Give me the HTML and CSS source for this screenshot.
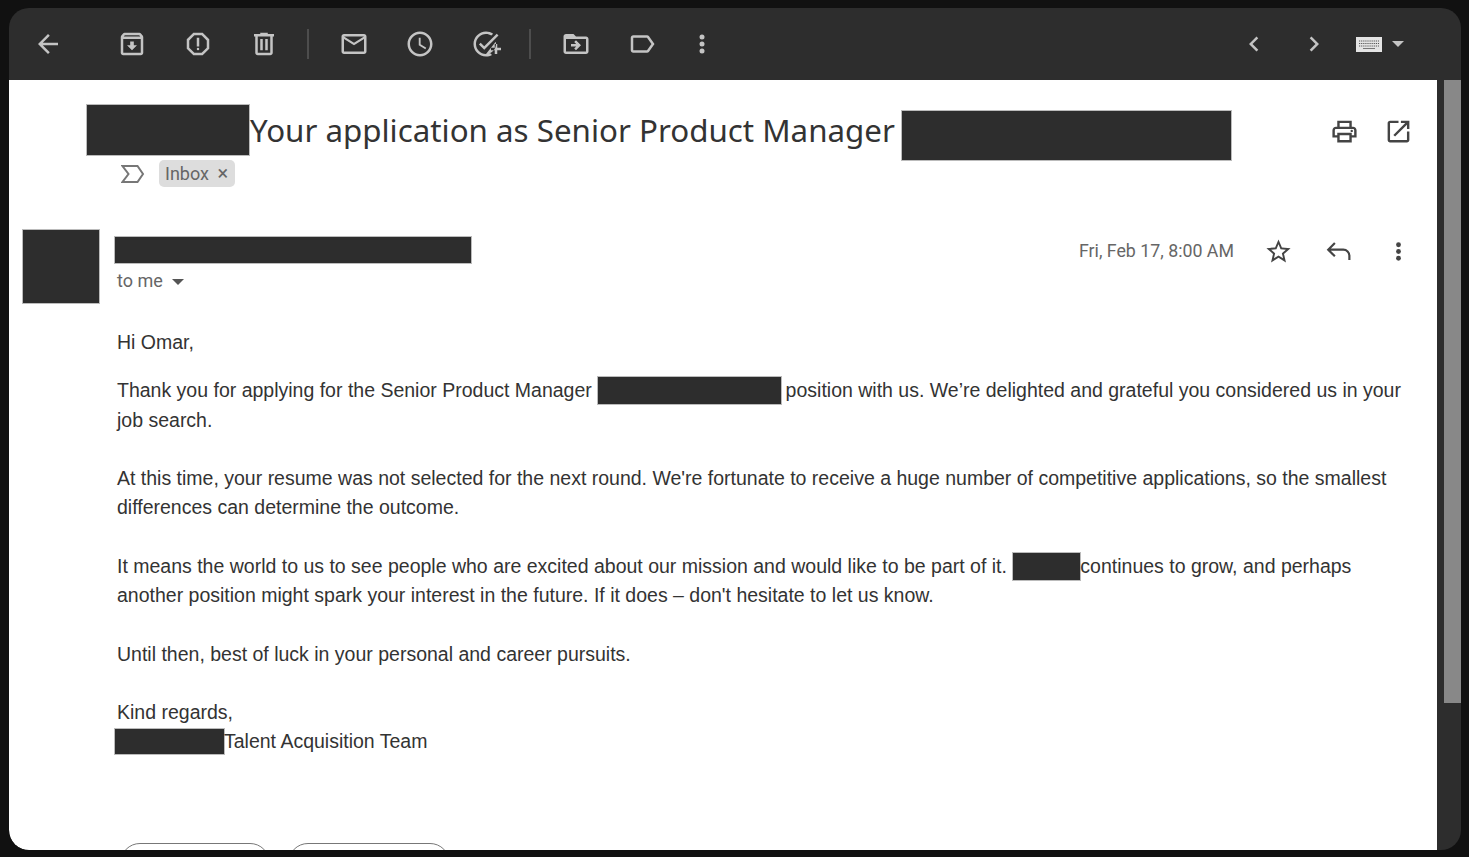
FILE: index.html
```html
<!DOCTYPE html>
<html lang="en">

<head>
    <meta charset="UTF-8">
    <title>Your application as Senior Product Manager</title>
    <link rel="stylesheet" href="styles.css">
</head>

<body>
    <div class="window">
        <div class="toolbar">
            <svg class="icon back" viewBox="0 0 24 24"><path d="M20 11H7.83l5.59-5.59L12 4l-8 8 8 8 1.41-1.41L7.83 13H20v-2z"/></svg>
            <div class="tool-group">
                <svg class="icon" viewBox="0 0 24 24"><path d="M20.54 5.23l-1.39-1.68C18.88 3.21 18.47 3 18 3H6c-.47 0-.88.21-1.16.55L3.46 5.23C3.17 5.57 3 6.02 3 6.5V19c0 1.1.9 2 2 2h14c1.1 0 2-.9 2-2V6.5c0-.48-.17-.93-.46-1.27zM6.24 5h11.52l.83 1H5.42l.82-1zM5 19V8h14v11H5zm8.45-9h-2.9v3H8l4 4 4-4h-2.55z"/></svg>
                <svg class="icon" viewBox="0 0 24 24"><path d="M15.73 3H8.27L3 8.27v7.46L8.27 21h7.46L21 15.73V8.27L15.73 3zM19 14.9L14.9 19H9.1L5 14.9V9.1L9.1 5h5.8L19 9.1v5.8z"/><circle cx="12" cy="16" r="1"/><path d="M11 7h2v7h-2z"/></svg>
                <svg class="icon" viewBox="0 0 24 24"><path d="M15 4V3H9v1H4v2h1v13c0 1.1.9 2 2 2h10c1.1 0 2-.9 2-2V6h1V4h-5zm2 15H7V6h10v13z"/><path d="M9 8h2v9H9zm4 0h2v9h-2z"/></svg>
            </div>
            <div class="tool-sep"></div>
            <div class="tool-group">
                <svg class="icon" viewBox="0 0 24 24"><path d="M20 4H4c-1.1 0-2 .9-2 2v12c0 1.1.9 2 2 2h16c1.1 0 2-.9 2-2V6c0-1.1-.9-2-2-2zm0 14H4V8l8 5 8-5v10zm-8-7L4 6h16l-8 5z"/></svg>
                <svg class="icon" viewBox="0 0 24 24"><path d="M11.99 2C6.47 2 2 6.48 2 12s4.47 10 9.99 10C17.52 22 22 17.52 22 12S17.52 2 11.99 2zM12 20c-4.42 0-8-3.58-8-8s3.58-8 8-8 8 3.58 8 8-3.58 8-8 8zm.5-13H11v6l5.25 3.15.75-1.23-4.5-2.67z"/></svg>
                <svg class="icon" viewBox="0 0 24 24"><path d="M22 5.18L10.59 16.6l-4.24-4.24 1.41-1.41 2.83 2.83 10-10L22 5.18zm-2.21 5.04c.13.57.21 1.17.21 1.78 0 4.42-3.58 8-8 8s-8-3.58-8-8 3.58-8 8-8c1.58 0 3.04.46 4.28 1.25l1.44-1.44C16.1 2.67 14.13 2 12 2 6.48 2 2 6.48 2 12s4.48 10 10 10c1.73 0 3.36-.44 4.78-1.22l-1.5-1.5c-1 .46-2.11.72-3.28.72zM19 15h-3v2h3v3h2v-3h3v-2h-3v-3h-2v3z"/></svg>
            </div>
            <div class="tool-sep"></div>
            <div class="tool-group">
                <svg class="icon" viewBox="0 0 24 24"><path d="M20 6h-8l-2-2H4c-1.1 0-1.99.9-1.99 2L2 18c0 1.1.9 2 2 2h16c1.1 0 2-.9 2-2V8c0-1.1-.9-2-2-2zm0 12H4V8h16v10z"/><path d="M12.16 12H8v2h4.16l-1.59 1.59L11.99 17 16 13l-4.01-4-1.42 1.41z"/></svg>
                <svg class="icon" viewBox="0 0 24 24"><path d="M17.63 5.84C17.27 5.33 16.67 5 16 5L5 5.01C3.9 5.01 3 5.9 3 7v10c0 1.1.9 1.99 2 1.99L16 19c.67 0 1.27-.33 1.63-.84L22 12l-4.37-6.16zM16 17H5V7h11l3.55 5L16 17z"/></svg>
                <svg class="icon more" viewBox="0 0 24 24"><circle cx="12" cy="6.4" r="2"/><circle cx="12" cy="12" r="2"/><circle cx="12" cy="17.6" r="2"/></svg>
            </div>
            <div class="tool-right">
                <svg class="icon" viewBox="0 0 24 24"><path d="M15.41 7.41L14 6l-6 6 6 6 1.41-1.41L10.83 12z"/></svg>
                <svg class="icon" viewBox="0 0 24 24"><path d="M10 6L8.59 7.41 13.17 12l-4.58 4.58L10 18l6-6z"/></svg>
                <div class="input-tools">
                    <svg class="keyboard" viewBox="0 0 26 15"><rect width="26" height="15" fill="#e4e4e4"/><path d="M3 4h20M3 6.5h20M3 9h20" stroke="#555" stroke-width="1.2" stroke-dasharray="1.2 .9"/><path d="M7 11.5h12" stroke="#777" stroke-width="1"/></svg>
                    <div class="caret-light"></div>
                </div>
            </div>
        </div>

        <div class="main">
            <div class="content">
                <div class="subject-row">
                    <div class="redact redact-a"></div>
                    <h1 class="subject">Your application as Senior Product Manager</h1>
                    <div class="redact redact-b"></div>
                    <div class="subject-actions">
                        <svg class="icon dark" viewBox="0 0 24 24"><path d="M19 8h-1V3H6v5H5c-1.66 0-3 1.34-3 3v6h4v4h12v-4h4v-6c0-1.66-1.34-3-3-3zM8 5h8v3H8V5zm8 12v2H8v-4h8v2zm2-2v-2H6v2H4v-4c0-.55.45-1 1-1h14c.55 0 1 .45 1 1v4h-2z"/><circle cx="18" cy="11.5" r="1"/></svg>
                        <svg class="icon dark" viewBox="0 0 24 24"><path d="M19 19H5V5h7V3H5c-1.11 0-2 .9-2 2v14c0 1.1.89 2 2 2h14c1.1 0 2-.9 2-2v-7h-2v7zM14 3v2h3.59l-9.83 9.83 1.41 1.41L19 6.41V10h2V3h-7z"/></svg>
                    </div>
                </div>
                <div class="label-row">
                    <svg class="important" viewBox="0 0 24 24"><path d="M1.5 4h15l5.5 8-5.5 8H1.5l6-8z"/></svg>
                    <span class="chip">Inbox <span class="chip-x">×</span></span>
                </div>

                <div class="message-head">
                    <div class="redact avatar"></div>
                    <div class="sender">
                        <div class="redact sender-name"></div>
                        <div class="to-me">to me <span class="caret"></span></div>
                    </div>
                    <div class="message-meta">
                        <span class="date">Fri, Feb 17, 8:00 AM</span>
                        <svg class="icon dark" viewBox="0 0 24 24"><path d="M22 9.24l-7.19-.62L12 2 9.19 8.63 2 9.24l5.46 4.73L5.82 21 12 17.27 18.18 21l-1.63-7.03L22 9.24zM12 15.4l-3.76 2.27 1-4.28-3.32-2.88 4.38-.38L12 6.1l1.71 4.04 4.38.38-3.32 2.88 1 4.28L12 15.4z"/></svg>
                        <svg class="icon dark" viewBox="0 0 24 24"><path class="reply-line" d="M9 5L3.5 10.5 9 16M3.5 10.5H16a5 5 0 0 1 5 5V19"/></svg>
                        <svg class="icon dark" viewBox="0 0 24 24"><circle cx="12" cy="6.4" r="2"/><circle cx="12" cy="12" r="2"/><circle cx="12" cy="17.6" r="2"/></svg>
                    </div>
                </div>

                <div class="message-body">
                    <p class="greeting">Hi Omar,</p>
                    <p>Thank you for applying for the Senior Product Manager <span class="redact inline-redact r-role"></span> position with us. We’re delighted and grateful you considered us in your job search.</p>
                    <p>At this time, your resume was not selected for the next round. We're fortunate to receive a huge number of competitive applications, so the smallest differences can determine the outcome.</p>
                    <p>It means the world to us to see people who are excited about our mission and would like to be part of it. <span class="redact inline-redact r-company"></span>continues to grow, and perhaps another position might spark your interest in the future. If it does – don't hesitate to let us know.</p>
                    <p>Until then, best of luck in your personal and career pursuits.</p>
                    <p class="signoff">Kind regards,<br><span class="redact inline-redact r-team"></span>Talent Acquisition Team</p>
                </div>

                <div class="reply-buttons">
                    <div class="reply-pill pill-reply"></div>
                    <div class="reply-pill pill-forward"></div>
                </div>
            </div>
            <div class="scroll-rail">
                <div class="scroll-thumb"></div>
            </div>
        </div>
    </div>
</body>

</html>
```

FILE: styles.css
```css
html,
body {
    height: 100%;
    margin: 0;
    overflow: hidden;
}

body {
    background-color: #111;
    padding: 8px 8px 7px 9px;
    box-sizing: border-box;
    font-family: "Liberation Sans", Arial, sans-serif;
}

.window {
    height: 842px;
    background-color: #2d2d2d;
    border-radius: 20px;
    overflow: hidden;
    display: flex;
    flex-direction: column;
}

.icon {
    width: 30px;
    height: 30px;
    flex: none;
    fill: #c4c4c4;
}

.icon.dark {
    width: 29px;
    height: 29px;
    fill: #444;
}

.reply-line {
    fill: none;
    stroke: #444;
    stroke-width: 1.8;
}

/* toolbar */
.toolbar {
    height: 72px;
    flex: none;
    display: flex;
    align-items: center;
    padding: 0 57px 0 24px;
}

.back {
    margin-right: 54px;
}

.tool-group {
    display: flex;
    align-items: center;
    gap: 36px;
}

.more {
    margin-left: -6px;
}

.tool-sep {
    width: 2px;
    height: 30px;
    background-color: #4d4d4d;
    margin: 0 30px 0 28px;
}

.tool-right {
    margin-left: auto;
    display: flex;
    align-items: center;
    gap: 30px;
}

.input-tools {
    display: flex;
    align-items: center;
    gap: 10px;
    margin-left: -3px;
}

.keyboard {
    width: 26px;
    height: 15px;
}

.caret-light {
    width: 0;
    height: 0;
    border-left: 6px solid transparent;
    border-right: 6px solid transparent;
    border-top: 6px solid #c4c4c4;
}

/* main area */
.main {
    flex: 1;
    min-height: 0;
    display: flex;
}

.content {
    flex: 1;
    min-width: 0;
    background-color: #fff;
    border-bottom-left-radius: 20px;
    overflow: hidden;
}

.scroll-rail {
    width: 24px;
    flex: none;
    display: flex;
    justify-content: flex-end;
}

.scroll-thumb {
    width: 17px;
    height: 623px;
    background-color: #888;
}

.redact {
    background-color: #2d2d2d;
    border: 1px solid #bbb;
    box-sizing: border-box;
}

/* subject */
.subject-row {
    display: flex;
    align-items: flex-start;
    padding: 24px 24.5px 0 77px;
    height: 80px;
    box-sizing: border-box;
}

.redact-a {
    width: 164px;
    height: 52px;
    flex: none;
}

.subject {
    margin: 6px 6px 0 0;
    font-family: "Noto Sans", sans-serif;
    font-size: 31.3px;
    font-weight: 400;
    line-height: 40px;
    color: #333;
    white-space: nowrap;
}

.redact-b {
    width: 331px;
    height: 51px;
    margin-top: 6px;
    flex: none;
}

.subject-actions {
    margin-left: auto;
    display: flex;
    gap: 25px;
    margin-top: 12.5px;
}

.label-row {
    display: flex;
    align-items: center;
    height: 27px;
    padding-left: 112px;
}

.important {
    width: 24px;
    height: 24px;
    fill: none;
    stroke: #777;
    stroke-width: 2;
    margin-right: 14px;
}

.chip {
    height: 27px;
    width: 76px;
    box-sizing: border-box;
    padding-left: 6px;
    background-color: #ddd;
    border-radius: 5px;
    font-family: "Roboto", sans-serif;
    font-size: 18px;
    line-height: 26px;
    color: #666;
}

.chip-x {
    font-size: 20px;
    margin-left: 4px;
}

/* message header */
.message-head {
    display: flex;
    align-items: flex-start;
    margin-top: 42px;
    padding: 0 24.5px 0 13px;
}

.avatar {
    width: 78px;
    height: 75px;
    flex: none;
}

.sender {
    margin-left: 14px;
    padding-top: 7px;
}

.sender-name {
    width: 358px;
    height: 28px;
}

.to-me {
    margin: 6px 0 0 3px;
    font-family: "Roboto", sans-serif;
    font-size: 18px;
    line-height: 22px;
    color: #666;
}

.caret {
    display: inline-block;
    width: 0;
    height: 0;
    margin-left: 5px;
    vertical-align: middle;
    border-left: 6px solid transparent;
    border-right: 6px solid transparent;
    border-top: 6px solid #555;
}

.message-meta {
    margin-left: auto;
    display: flex;
    align-items: center;
    gap: 31px;
    margin-top: 8px;
}

.date {
    font-family: "Roboto", sans-serif;
    font-size: 17.8px;
    color: #666;
    padding-bottom: 2px;
    margin-right: -1.5px;
}

/* message body */
.message-body {
    margin-top: 24px;
    padding: 0 27px 0 108px;
    font-size: 19.5px;
    line-height: 29.3px;
    color: #333;
}

.message-body p {
    margin: 0 0 29.3px;
}

.message-body .greeting {
    margin-bottom: 19px;
}

.message-body .signoff {
    margin: -1px 0 0;
}

.inline-redact {
    display: inline-block;
    vertical-align: top;
    height: 29px;
}

.r-role {
    width: 185px;
    margin-right: -2px;
}

.r-company {
    width: 69px;
    margin-right: -1px;
}

.r-team {
    width: 111px;
    height: 27px;
    margin: 1px -1px 0 -3px;
}

.reply-buttons {
    display: flex;
    gap: 18px;
    margin-top: 87px;
    padding-left: 111px;
}

.reply-pill {
    height: 40px;
    border: 1px solid #777;
    border-radius: 20px;
    box-sizing: border-box;
}

.pill-reply {
    width: 150px;
}

.pill-forward {
    width: 162px;
}
```
